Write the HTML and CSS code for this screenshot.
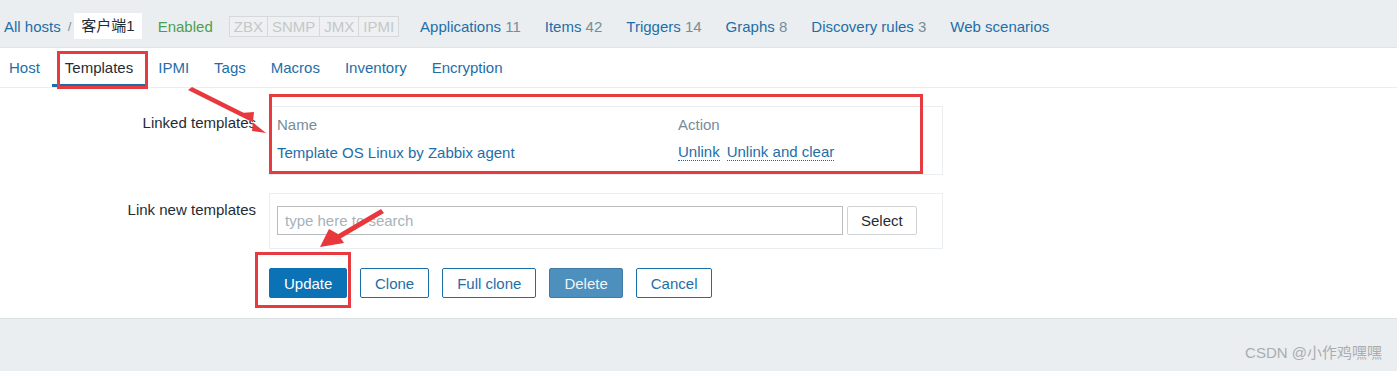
FILE: index.html
```html
<!DOCTYPE html>
<html lang="en">
<head>
    <meta charset="UTF-8">
    <title>Hosts - Templates</title>
    <meta name="viewport" content="width=device-width, initial-scale=1.0">
    <link rel="stylesheet" href="styles.css">
</head>
<body>
    <div class="host-nav">
        <a href="#" class="crumb">All hosts</a>
        <span class="crumb-sep">/</span>
        <span class="crumb-current">客户端1</span>
        <span class="status-enabled">Enabled</span>
        <span class="avail">
            <span class="avail-tag">ZBX</span><span class="avail-tag">SNMP</span><span class="avail-tag">JMX</span><span class="avail-tag">IPMI</span>
        </span>
        <a href="#" class="host-link">Applications <span class="count">11</span></a>
        <a href="#" class="host-link">Items <span class="count">42</span></a>
        <a href="#" class="host-link">Triggers <span class="count">14</span></a>
        <a href="#" class="host-link">Graphs <span class="count">8</span></a>
        <a href="#" class="host-link">Discovery rules <span class="count">3</span></a>
        <a href="#" class="host-link">Web scenarios</a>
    </div>

    <nav class="tabs">
        <a href="#" class="tab">Host</a>
        <a href="#" class="tab active">Templates</a>
        <a href="#" class="tab">IPMI</a>
        <a href="#" class="tab">Tags</a>
        <a href="#" class="tab">Macros</a>
        <a href="#" class="tab">Inventory</a>
        <a href="#" class="tab">Encryption</a>
    </nav>

    <div class="form-panel">
        <div class="form-grid">
            <label class="form-label">Linked templates</label>
            <div class="field-box linked-box">
                <table class="linked-table">
                    <thead>
                        <tr>
                            <th class="col-name">Name</th>
                            <th>Action</th>
                        </tr>
                    </thead>
                    <tbody>
                        <tr>
                            <td><a href="#" class="plain-link">Template OS Linux by Zabbix agent</a></td>
                            <td class="actions">
                                <a href="#" class="dotted-link">Unlink</a>
                                <a href="#" class="dotted-link">Unlink and clear</a>
                            </td>
                        </tr>
                    </tbody>
                </table>
            </div>

            <label class="form-label">Link new templates</label>
            <div class="field-box search-box">
                <input type="text" class="search-input" placeholder="type here to search">
                <button class="btn-select">Select</button>
            </div>

            <div class="form-buttons">
                <button class="btn btn-primary">Update</button>
                <button class="btn">Clone</button>
                <button class="btn">Full clone</button>
                <button class="btn btn-delete">Delete</button>
                <button class="btn">Cancel</button>
            </div>
        </div>
    </div>

    <div class="page-footer">
        <span class="watermark">CSDN @小作鸡嘿嘿</span>
    </div>

    <!-- anotações em vermelho sobre a captura -->
    <div class="mark mark-tab"></div>
    <div class="mark mark-table"></div>
    <div class="mark mark-update"></div>
    <svg class="arrows" width="1397" height="371" viewBox="0 0 1397 371">
        <polygon fill="#e8383d" points="188,90 192,87 252,117 250,121"/>
        <polygon fill="#e8383d" points="266,133 241,113 254,112 252,131"/>
        <polygon fill="#e8383d" points="381,209 384,213 338,240 335,236"/>
        <polygon fill="#e8383d" points="320,247 329,229 338,234 344,243"/>
    </svg>
</body>
</html>
```

FILE: styles.css
```css
body {
    margin: 0;
    font-family: "Liberation Sans", Arial, "Noto Sans CJK SC", sans-serif;
    font-size: 15px;
    background-color: #ebeef0;
    color: #1f2c33;
    position: relative;
    height: 371px;
    overflow: hidden;
}
a {
    text-decoration: none;
}
.host-nav {
    height: 42px;
    padding-top: 5px;
    display: flex;
    align-items: center;
    padding-left: 4px;
    border-bottom: 1px solid #dfe4e7;
}
.crumb {
    color: #1d6ea8;
}
.crumb-sep {
    color: #768d99;
    font-size: 13px;
    margin: 0 3px 0 7px;
}
.crumb-current {
    background-color: #fff;
    padding: 5px 7px;
    line-height: 16px;
}
.status-enabled {
    color: #4c9e52;
    margin-left: 16px;
}
.avail {
    display: flex;
    margin-left: 16px;
    border: 1px solid #d5d9dc;
    background-color: #eef0f1;
}
.avail-tag {
    color: #c3c8cb;
    padding: 1px 4px;
    line-height: 17px;
    border-left: 1px solid #d5d9dc;
}
.avail-tag:first-child {
    border-left: none;
}
.host-link {
    color: #1d6ea8;
    margin-left: 24px;
}
.avail + .host-link {
    margin-left: 21px;
}
.count {
    color: #768d99;
}
.tabs {
    background-color: #fff;
    height: 39px;
    display: flex;
    border-bottom: 1px solid #ebeef0;
}
.tab {
    color: #1d6ea8;
    padding: 0 12.5px;
    line-height: 39px;
    border-bottom: 3px solid transparent;
    height: 36px;
}
.tab:first-child {
    padding-left: 9px;
}
.tab.active {
    color: #1f2c33;
    border-bottom-color: #1d6ea8;
}
.form-panel {
    background-color: #fff;
    padding: 18px 0 20px;
    border-bottom: 1px solid #dde2e5;
}
.form-grid {
    display: grid;
    grid-template-columns: 256px 674px;
    column-gap: 13px;
    row-gap: 18px;
}
.form-label {
    text-align: right;
    padding-top: 8px;
    line-height: 18px;
}
.field-box {
    border: 1px solid #ebeef0;
}
.linked-box {
    padding: 3px 7px 8px;
}
.linked-table {
    border-collapse: collapse;
    width: 100%;
}
.linked-table th {
    text-align: left;
    font-weight: normal;
    color: #768d99;
    height: 28px;
    padding: 0;
}
.linked-table td {
    height: 28px;
    padding: 0;
}
.col-name {
    width: 401px;
}
.plain-link {
    color: #1d6ea8;
}
.actions {
    display: flex;
    gap: 7px;
    align-items: center;
}
.dotted-link {
    color: #1d6ea8;
    border-bottom: 1px dotted #1d6ea8;
    line-height: 17px;
}
.search-box {
    display: flex;
    gap: 4px;
    padding: 12px 7px 13px;
}
.search-input {
    width: 566px;
    height: 29px;
    box-sizing: border-box;
    border: 1px solid #b9bdbf;
    padding: 0 7px;
    font-family: inherit;
    font-size: 15px;
}
.search-input::placeholder {
    color: #a7b2b8;
}
.btn-select {
    height: 29px;
    padding: 0 13px;
    background-color: #fff;
    border: 1px solid #cfd3d5;
    border-radius: 2px;
    color: #1f2c33;
    font-family: inherit;
    font-size: 15px;
}
.form-buttons {
    grid-column: 2;
    display: flex;
    gap: 13px;
    margin-top: 1px;
}
.btn {
    height: 30px;
    padding: 0 14px;
    background-color: #fff;
    border: 1px solid #1d6ea8;
    border-radius: 2px;
    color: #1d6ea8;
    font-family: inherit;
    font-size: 15px;
}
.btn-primary {
    background-color: #0b72b5;
    border-color: #0b72b5;
    color: #fff;
    width: 78px;
}
.btn-delete {
    background-color: #4d8fbd;
    border-color: #3f7ba5;
    color: #eef4f8;
}
.page-footer {
    height: 52px;
    display: flex;
    justify-content: flex-end;
    align-items: center;
    padding-right: 15px;
}
.watermark {
    color: #a9adb0;
    font-size: 15px;
    margin-top: 12px;
}
/* caixas vermelhas da anotação */
.mark {
    position: absolute;
    border: 3px solid #e63b40;
    box-sizing: border-box;
}
.mark-tab {
    left: 57px;
    top: 51px;
    width: 91px;
    height: 38px;
}
.mark-table {
    left: 269px;
    top: 94px;
    width: 654px;
    height: 80px;
}
.mark-update {
    left: 255px;
    top: 252px;
    width: 96px;
    height: 56px;
}
.arrows {
    position: absolute;
    left: 0;
    top: 0;
    pointer-events: none;
}
```
